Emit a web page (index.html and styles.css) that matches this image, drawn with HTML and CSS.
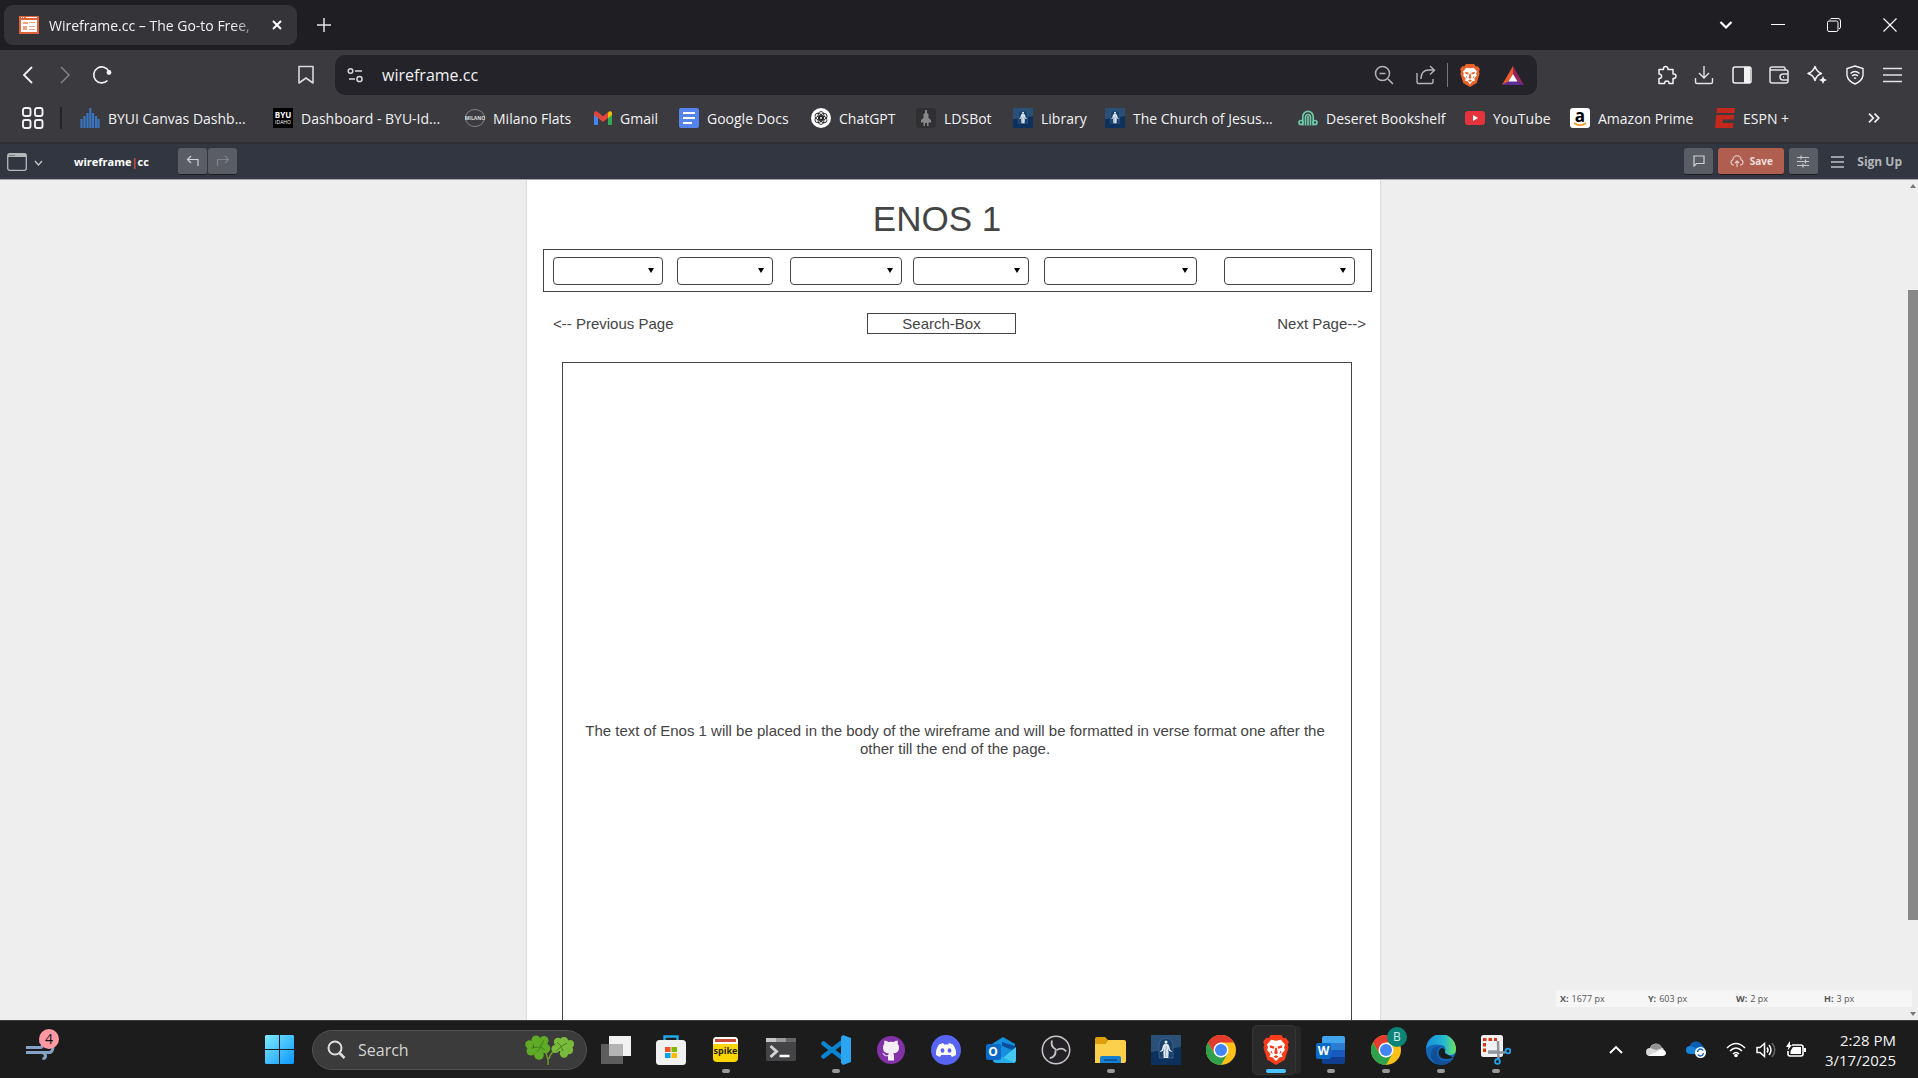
FILE: index.html
```html
<!DOCTYPE html>
<html lang="en">
<head>
<meta charset="utf-8">
<title>Wireframe.cc</title>
<link rel="stylesheet" href="styles.css">
</head>
<body>
<svg class="defs" aria-hidden="true">
  <symbol id="lion" viewBox="0 0 24 28">
    <path d="M7 0h10l2 3 2-.5L24 6l-1 3 .7 3-3.500 11L12 28l-8.200-5L.3 12 1 9 0 6l3-3.500L5 3z" fill="currentColor"/>
    <path d="M7.500 4.500 12 5.300l4.500-.8 4 4.500-1 2.500.8 2.500-3.300 4 1.500 2-3.500 1-3 3.500L9 21l-3.500-1L7 18l-3.300-4 .8-2.500-1-2.500z" fill="#fff"/>
    <path d="m6 9.500 4.500 1.300-.5 2-3.500-1zm12 0-4.500 1.300.5 2 3.500-1zM11.200 12h1.600l.8 5L12 18l-1.600-1zM7.500 14.500l1.500 3-2-1zm9 0-1.500 3 2-1zM9.500 20l2.500-1 2.500 1-2.500 1.800z" fill="currentColor"/>
  </symbol>
  <symbol id="church" viewBox="0 0 30 30">
    <path d="M0 0h30v30H0z" fill="#0b315c"/><path d="M0 0h30v12L0 17z" fill="#2b5078"/>
    <path d="M8 23V10a7 7 0 0 1 14 0v13z" fill="#17406c" stroke="#456a90" stroke-width=".8"/>
    <circle cx="15" cy="7" r="1.500" fill="#e8f0f5"/>
    <path d="m13.500 8.800 3 0 1.500 1.700 1.300 4.500 1.700 1.200-.7.800-2.300-1.200-1-2.300.7 4-.4 5.500h-4.600l-.4-5.500.7-4-1 2.300L9.700 17l-.7-.8 1.700-1.200 1.300-4.500z" fill="#dce7ee"/>
    <path d="m15.500 11-1 6 .3 5" stroke="#7c95ac" stroke-width=".7"/>
  </symbol>
  <symbol id="chrome" viewBox="0 0 30 30">
    <circle cx="15" cy="15" r="15" fill="#fbc116"/>
    <path d="M2 7.500A15 15 0 0 1 28 7.500H15L8.500 18.700z" fill="#e33b2e"/>
    <path d="M2 7.500 8.500 18.700 15 22.500l6.500-3.800L15 30A15 15 0 0 1 2 7.500z" fill="#2da14c"/>
    <circle cx="15" cy="15" r="7.500" fill="#fff"/><circle cx="15" cy="15" r="6" fill="#4285f4"/>
  </symbol>
</svg>

<header class="browser">
  <div class="tabstrip">
    <div class="tab">
      <svg width="20" height="18" viewBox="0 0 20 18"><path d="M0 0h20v18H0z" fill="#e0633a"/><path d="M2 4h16v12H2z" fill="#fff"/><path d="M2 1.500h1m1 0h1m2 0h11" stroke="#fff"/><path d="M4 6h5v2H4zm0 4h4v4H4zm6-4h6v1h-6zm0 4h6v1h-6zm0 3h6v1h-6z" fill="#f0a080"/></svg>
      <span class="tab-title">Wireframe.cc – The Go-to Free,</span>
      <button class="plain tab-close" aria-label="Close tab"><svg width="10" height="10" viewBox="0 0 10 10"><path d="m1 1 8 8m0-8-8 8" stroke="#fff" stroke-width="2"/></svg></button>
    </div>
    <button class="plain new-tab" aria-label="New tab"><svg width="14" height="14" viewBox="0 0 14 14"><path d="M7 0v14M0 7h14" stroke="#e4e4e6" stroke-width="1.500"/></svg></button>
    <div class="window-controls">
      <button class="plain search-tabs" aria-label="Search tabs"><svg width="14" height="10" viewBox="0 0 14 10"><path d="m1.500 2 5.500 5.500L12.500 2" stroke="#fff" stroke-width="2.200"/></svg></button>
      <button class="plain" aria-label="Minimize"><svg width="14" height="14" viewBox="0 0 14 14"><path d="M0 6.500h14" stroke="#fff"/></svg></button>
      <button class="plain" aria-label="Restore"><svg width="14" height="14" viewBox="0 0 14 14"><rect x=".5" y="3" width="10.500" height="10.500" rx="1.500" stroke="#fff"/><path d="M3 1.500Q3.500.5 5 .5h6Q13.500.5 13.500 3v6q0 1.500-1.500 2" stroke="#fff"/></svg></button>
      <button class="plain" aria-label="Close"><svg width="14" height="14" viewBox="0 0 14 14"><path d="m.5.5 13 13m0-13-13 13" stroke="#fff" stroke-width="1.200"/></svg></button>
    </div>
  </div>

  <div class="toolbar">
    <div class="nav">
      <button class="plain" aria-label="Back"><svg width="12" height="18" viewBox="0 0 12 18"><path d="M10 1 2 9l8 8" stroke="#f2f2f3" stroke-width="1.800"/></svg></button>
      <button class="plain" aria-label="Forward"><svg width="12" height="18" viewBox="0 0 12 18"><path d="m2 1 8 8-8 8" stroke="#828287" stroke-width="1.500"/></svg></button>
      <button class="plain" aria-label="Reload"><svg width="20" height="20" viewBox="0 0 20 20"><path d="M15.500 15.500a8 8 0 1 1 1.500-9" stroke="#f2f2f3" stroke-width="1.700"/><circle cx="17" cy="7.500" r="2.400" fill="#f2f2f3"/></svg></button>
      <button class="plain bookmark-btn" aria-label="Bookmark"><svg width="16" height="20" viewBox="0 0 16 20"><path d="M1 1.500h14V18l-7-5-7 5z" stroke="#d9d9dc" stroke-width="1.600" stroke-linejoin="round"/></svg></button>
    </div>
    <div class="omnibox">
      <svg width="17" height="16" viewBox="0 0 17 16"><circle cx="3.500" cy="4" r="2.300" stroke="#d8d8db" stroke-width="1.500"/><path d="M8 4h7M2 12h6" stroke="#d8d8db" stroke-width="1.500"/><circle cx="12.500" cy="12" r="2.600" stroke="#d8d8db" stroke-width="1.500"/></svg>
      <input type="text" value="wireframe.cc" aria-label="Address">
      <div class="omni-actions">
        <button class="plain" aria-label="Zoom out"><svg width="20" height="20" viewBox="0 0 20 20"><circle cx="8.500" cy="8.500" r="7" stroke="#b4b4b8" stroke-width="1.500"/><path d="M5.500 8.500h6m2.500 5.500 5 5" stroke="#b4b4b8" stroke-width="1.500"/></svg></button>
        <button class="plain share" aria-label="Share"><svg width="20" height="20" viewBox="0 0 20 20"><path d="M1 8v9q0 1.500 1.500 1.500h13q1.500 0 1.500-1.500v-3M5 14q0-9 8-9h5M14 1l4.500 4.200L14 9.500" stroke="#b4b4b8" stroke-width="1.400"/></svg></button>
        <button class="plain" aria-label="Shields"><svg class="orange" width="20" height="23"><use href="#lion"/></svg></button>
        <button class="plain" aria-label="Rewards"><svg width="22" height="19" viewBox="0 0 22 19"><path d="M11 0 0 19l7-3.500L11 8z" fill="#f05a2c"/><path d="m11 0 11 19-7-3.500L11 8z" fill="#93245f"/><path d="m0 19 7-4h8l7 4z" fill="#5b2c91"/><path d="m11 8 4.500 7.500h-9z" fill="#fff"/></svg></button>
      </div>
    </div>
    <div class="extensions">
      <button class="plain" aria-label="Extensions"><svg width="20" height="20" viewBox="0 0 20 20"><path d="M2 4.500h4.500c-1-4 5-4 4.500 0H16V9c4-.8 4 5 0 4.500v5h-4c.5-3.500-4.500-3.500-4.500 0H2v-5c3.500.3 3.500-4.500 0-4.500z" stroke="#f2f2f3" stroke-width="1.500" stroke-linejoin="round"/></svg></button>
      <button class="plain" aria-label="Downloads"><svg width="20" height="20" viewBox="0 0 20 20"><path d="M10 1v12m-5-5 5 5 5-5M1.500 13v4q0 1.500 1.500 1.500h14q1.500 0 1.500-1.500v-4" stroke="#e4e4e7" stroke-width="1.400"/></svg></button>
      <button class="plain" aria-label="Sidebar"><svg width="20" height="18" viewBox="0 0 20 18"><rect x="1" y="1" width="18" height="16" rx="2" stroke="#f2f2f3" stroke-width="1.500"/><path d="M12 1h6v16h-6z" fill="#f2f2f3"/></svg></button>
      <button class="plain" aria-label="Wallet"><svg width="20" height="18" viewBox="0 0 20 18"><path d="M16 4V2.500Q16 1 14.500 1H3Q1 1 1 3v12q0 2 2 2h14q2 0 2-2V6q0-2-2-2H3Q1 4 1 3m18 5h-5a3 3 0 0 0 0 6h5M14 11h1" stroke="#e4e4e7" stroke-width="1.500"/></svg></button>
      <button class="plain" aria-label="Assistant"><svg width="20" height="20" viewBox="0 0 20 20"><path d="M8 1.500q1.500 5 6.500 7-5 1.500-6.500 7-1.500-5.500-7-7 5.500-2 7-7z" stroke="#f2f2f3" stroke-width="1.500" stroke-linejoin="round"/><path d="m16 11 1.200 2.800L20 15l-2.800 1.200L16 19l-1.200-2.800L12 15l2.800-1.200z" fill="#f2f2f3"/></svg></button>
      <button class="plain" aria-label="VPN"><svg width="18" height="20" viewBox="0 0 18 20"><path d="m9 1 8 2.500v7Q16 16 9 19 2 16 1 10.500v-7z" stroke="#f2f2f3" stroke-width="1.400"/><path d="M4.500 8.500q4.500-4 9 0M6 11q3-2.500 6 0m-4 2.500q1-.8 2 0" stroke="#f2f2f3" stroke-width="1.500"/></svg></button>
      <button class="plain" aria-label="Menu"><svg width="19" height="16" viewBox="0 0 19 16"><path d="M0 1.500h19M0 8h19M0 14.500h19" stroke="#e4e4e7" stroke-width="1.500"/></svg></button>
    </div>
  </div>

  <nav class="bookmarks" aria-label="Bookmarks">
    <button class="plain apps" aria-label="Bookmark groups"><svg width="22" height="22" viewBox="0 0 22 22" stroke="#f2f2f3" stroke-width="1.900"><rect x="1" y="1" width="7.500" height="8" rx="2"/><rect x="13" y="1" width="7.500" height="8" rx="2"/><rect x="1" y="13" width="7.500" height="8" rx="2"/><rect x="13" y="13" width="7.500" height="8" rx="2"/></svg></button>
    <div class="links">
      <a href="#"><svg width="20" height="20" viewBox="0 0 20 20"><path d="M1.500 20v-9m3 9V8m3 12V5m2.800 15V0m2.700 20V5m3 15V8m2.500 12v-9" stroke="#3974bd" stroke-width="2.200"/></svg>BYUI Canvas Dashb...</a>
      <a href="#"><span class="byu" aria-hidden="true"><b>BYU</b><i>IDAHO</i></span>Dashboard - BYU-Id...</a>
      <a href="#"><span class="milano" aria-hidden="true">MILANO</span>Milano Flats</a>
      <a href="#"><svg width="18" height="14" viewBox="0 0 18 14"><path d="M0 2v11q0 1 1 1h3V5z" fill="#4285f4"/><path d="M18 2v11q0 1-1 1h-3V5z" fill="#34a853"/><path d="M14 1.500Q16-1 18 1.500V4l-4 3z" fill="#fbbc04"/><path d="M0 4V1.500Q2-1 4 1.200l5 4 5-4V7l-5 4-5-4z" fill="#e2453a"/></svg>Gmail</a>
      <a href="#"><svg width="20" height="20" viewBox="0 0 20 20"><rect width="20" height="20" rx="2" fill="#5684ee"/><path d="M4 5h12M4 10h12M4 15h9" stroke="#fff" stroke-width="2.200"/></svg>Google Docs</a>
      <a href="#"><svg width="20" height="20" viewBox="0 0 20 20"><circle cx="10" cy="10" r="10" fill="#fff"/><g stroke="#222" stroke-width=".9"><ellipse cx="10" cy="7.500" rx="3" ry="4"/><ellipse cx="10" cy="7.500" rx="3" ry="4" transform="rotate(60 10 10)"/><ellipse cx="10" cy="7.500" rx="3" ry="4" transform="rotate(120 10 10)"/><ellipse cx="10" cy="7.500" rx="3" ry="4" transform="rotate(180 10 10)"/><ellipse cx="10" cy="7.500" rx="3" ry="4" transform="rotate(240 10 10)"/><ellipse cx="10" cy="7.500" rx="3" ry="4" transform="rotate(300 10 10)"/></g></svg>ChatGPT</a>
      <a href="#"><svg width="20" height="20" viewBox="0 0 20 20"><rect width="20" height="20" rx="4" fill="#302f31"/><path d="M9 2h2v3l1.500 1v4l2.500 2v3l-1.500-1-1 1v3h-1.500v-3h-2v3H7.500v-3l-1-1L5 15v-3l2.500-2V6L9 5z" fill="#88888a"/></svg>LDSBot</a>
      <a href="#"><svg width="20" height="20"><use href="#church"/></svg>Library</a>
      <a href="#"><svg width="20" height="20"><use href="#church"/></svg>The Church of Jesus...</a>
      <a href="#"><svg width="20" height="16" viewBox="0 0 20 16" stroke="#6dc9a6" stroke-width="1.700"><path d="M4.800 15.500V6.500a5.200 5.200 0 0 1 10.400 0v9M7.500 15.500V7a2.500 2.500 0 0 1 5 0v8.500M10 6v9.500"/><circle cx="3" cy="12.500" r="2"/><circle cx="17" cy="12.500" r="2"/></svg>Deseret Bookshelf</a>
      <a href="#"><svg width="20" height="14" viewBox="0 0 20 14"><rect width="20" height="14" rx="3" fill="#e4333c"/><path d="m8 4 5 3-5 3z" fill="#fff"/></svg>YouTube</a>
      <a href="#"><span class="amazon" aria-hidden="true">a<svg width="14" height="5" viewBox="0 0 14 5"><path d="M1 1q6 4.500 12 0" stroke="#f19a20" stroke-width="1.700"/></svg></span>Amazon Prime</a>
      <a href="#"><svg width="20" height="20" viewBox="0 0 20 20"><path d="M2 0h18l-.5 5H1.500zM1.200 7h18l-.5 4.500H8l-.4 3.500h10.800L18 20H0z" fill="#c4281d"/></svg>ESPN +</a>
    </div>
    <button class="plain more" aria-label="More bookmarks"><svg width="12" height="10" viewBox="0 0 12 10"><path d="m1 .7 4.300 4.300L1 9.300M6.500.7 10.800 5 6.500 9.300" stroke="#f2f2f3" stroke-width="1.700"/></svg></button>
  </nav>
</header>

<div class="appbar">
  <button class="plain device" aria-label="Choose page size"><svg width="36" height="18" viewBox="0 0 36 18"><rect x=".7" y=".7" width="18.600" height="16.600" rx="2" stroke="#b5b7bb" stroke-width="1.300"/><path d="M1 1h18v3H1z" fill="#b5b7bb"/><path d="M2.500 2.500h5" stroke="#444" stroke-dasharray="1 1"/><path d="m28 8 3.500 4L35 8" stroke="#c5c7ca" stroke-width="1.300"/></svg></button>
  <a class="logo" href="#">wireframe<span>|</span>cc</a>
  <div class="history">
    <button class="tool" aria-label="Undo"><svg width="14" height="12" viewBox="0 0 14 12"><path d="M5 1 1.500 4.500 5 8M2 4.500h10V11" stroke="#cfd1d4" stroke-width="1.200"/></svg></button>
    <button class="tool" aria-label="Redo"><svg width="14" height="12" viewBox="0 0 14 12"><path d="m9 1 3.500 3.500L9 8m3-3.500H1.500V11" stroke="#808289" stroke-width="1.200"/></svg></button>
  </div>
  <div class="app-actions">
    <button class="tool" aria-label="Comments"><svg width="12" height="12" viewBox="0 0 12 12"><path d="M1 11V1h10v7.500H3.500z" stroke="#d0d2d5" stroke-width="1.200"/></svg></button>
    <button class="tool save"><svg width="14" height="12" viewBox="0 0 14 12"><path d="M4 10H3.500A2.700 2.700 0 0 1 3 4.700a4 4 0 0 1 8 0A2.700 2.700 0 0 1 10.500 10H10M7 12V6M5 8l2-2 2 2" stroke="#e8d5d0" stroke-width="1.100"/></svg>Save</button>
    <button class="tool" aria-label="Settings"><svg width="13" height="13" viewBox="0 0 13 13"><path d="M0 2.500h12M0 6.500h12M0 10.500h12M4 .5v4M8.500 4.500v4M6 8.500v4" stroke="#c5c7ca" stroke-width="1.200"/></svg></button>
    <button class="plain burger" aria-label="Menu"><svg width="13" height="12" viewBox="0 0 13 12"><path d="M0 1h13M0 6h13M0 11h13" stroke="#c0c2c6" stroke-width="1.300"/></svg></button>
    <a class="signup" href="#">Sign Up</a>
  </div>
</div>

<main class="editor">
  <div class="stage">
    <article class="board">
      <h1>ENOS 1</h1>
      <div class="menus">
        <span class="pick p1"><select aria-label="Menu 1"><option></option></select></span>
        <span class="pick p2"><select aria-label="Menu 2"><option></option></select></span>
        <span class="pick p3"><select aria-label="Menu 3"><option></option></select></span>
        <span class="pick p4"><select aria-label="Menu 4"><option></option></select></span>
        <span class="pick p5"><select aria-label="Menu 5"><option></option></select></span>
        <span class="pick p6"><select aria-label="Menu 6"><option></option></select></span>
      </div>
      <div class="pager">
        <a href="#">&lt;-- Previous Page</a>
        <input type="text" value="Search-Box" aria-label="Search">
        <a href="#">Next Page--&gt;</a>
      </div>
      <section class="content"><p>The text of Enos 1 will be placed in the body of the wireframe and will be formatted in verse format one after the other till the end of the page.</p></section>
    </article>
  </div>
  <div class="scrollbar" aria-hidden="true"><i class="up"></i><div class="track"><div class="thumb"></div></div><i class="down"></i></div>
  <dl class="coords">
    <div><dt>X:</dt><dd>1677 px</dd></div>
    <div><dt>Y:</dt><dd>603 px</dd></div>
    <div><dt>W:</dt><dd>2 px</dd></div>
    <div><dt>H:</dt><dd>3 px</dd></div>
  </dl>
</main>

<footer class="taskbar">
  <button class="plain weather" aria-label="Widgets"><svg width="30" height="20" viewBox="0 0 30 20"><path d="M1 7.500h14q2.500 0 2.500-3t-3-2M1 12.500h24q3-1 3-6M1 12.500h16q3.500.5 3.500 3.500t-3 2" stroke="#86a3c6" stroke-width="3"/></svg><span class="badge">4</span></button>
  <button class="plain slot" aria-label="Start"><svg width="29" height="29" viewBox="0 0 29 29"><defs><linearGradient id="win" x2="1" y2="1"><stop stop-color="#7eeaff"/><stop offset="1" stop-color="#0a97ff"/></linearGradient></defs><path d="M1 0h13v14H0V1zm14 0h13l1 1v13H15zM0 15h14v14H1l-1-1zm15 0h14v13l-1 1H15z" fill="url(#win)"/></svg></button>
  <label class="search"><svg width="19" height="19" viewBox="0 0 19 19"><circle cx="8" cy="8" r="6.500" stroke="#dedede" stroke-width="2"/><path d="m12.500 13 5 5" stroke="#dedede" stroke-width="2.500"/></svg><input type="text" placeholder="Search" aria-label="Search">
    <svg width="49" height="30" viewBox="0 0 49 30"><path d="M23 30Q24 20 17 13M24 24q1-7 12-13" stroke="#6e9a25" stroke-width="1.600"/><g fill="#5faa26"><circle cx="11" cy="5" r="4.500"/><circle cx="19" cy="5.500" r="4.500"/><circle cx="4.500" cy="9.500" r="4.200"/><circle cx="6" cy="16" r="4.500"/><circle cx="20.500" cy="13.500" r="4.800"/><circle cx="14" cy="20" r="4.800"/><path d="M9 6h9l-1 12H9z"/></g><g fill="#79ba3c"><circle cx="33" cy="7" r="4.200"/><circle cx="39" cy="6" r="4"/><circle cx="45" cy="9" r="4"/><circle cx="30.500" cy="14" r="4"/><circle cx="39" cy="18.500" r="4.200"/><circle cx="44" cy="15" r="4.200"/><path d="M33 8h9v8h-9z"/></g><path d="m6 13 9-1 4-7m-7 12 4-5 4 3m11 1 6-5 5-3m-4 8-2-5-4-4" stroke="#408619"/></svg></label>
  <div class="pinned">
    <button class="plain slot" aria-label="Task view"><svg width="30" height="28" viewBox="0 0 30 28"><path d="M0 8h22v20H0z" fill="#5d5d5d"/><path d="M8 0h22v20H8z" fill="#f1f1f1"/><path d="M8 8h14v12H8z" fill="#b4b4b4"/></svg></button>
    <button class="plain slot" aria-label="Store"><svg width="30" height="30" viewBox="0 0 30 30"><path d="M8.500 6V1.500h13V6" stroke="#1fa7e8" stroke-width="2.400"/><rect y="5" width="30" height="25" rx="3.500" fill="#f1f1f1"/><path d="M9 12h5.500v5H9z" fill="#f25022"/><path d="M15.500 12H21v5h-5.500z" fill="#7fba00"/><path d="M9 18h5.500v5H9z" fill="#00a4ef"/><path d="M15.500 18H21v5h-5.500z" fill="#ffb900"/></svg></button>
    <button class="plain slot open" aria-label="Spike"><span class="spike"><i></i><b>spike</b></span></button>
    <button class="plain slot" aria-label="Terminal"><svg width="30" height="23" viewBox="0 0 30 23"><rect width="30" height="23" rx="1.500" fill="#444446"/><path d="M0 0h10v4H0z" fill="#c8c8c8"/><path d="M10 0h10v4H10z" fill="#999"/><path d="M20 0h10v4H20z" fill="#666"/><path d="m4.500 8 6 5.500-6 5.500" stroke="#d2d2d2" stroke-width="3"/><path d="M13.500 18h10" stroke="#fff" stroke-width="2.500"/></svg></button>
    <button class="plain slot open" aria-label="Code"><svg width="30" height="30" viewBox="0 0 30 30"><path d="M22 6.500 2.500 21.500M2.500 8.500 22 23.500" stroke="#0b84cf" stroke-width="4.500" stroke-linecap="round"/><path d="m22 0 8 3v24l-8 3-2-2V2z" fill="#2ba4f2"/></svg></button>
    <button class="plain slot" aria-label="GitHub"><svg width="28" height="28" viewBox="0 0 28 28"><circle cx="14" cy="14" r="14" fill="#8331a7"/><path d="M11 24.500v-4.300c-4.500.8-4.500-2.700-6-3.200 2-.5 2.500 2 4 2.300 1 .2 1.500 0 2.200-.3.100-.8.400-1.300.8-1.600-3.500-.4-6-1.800-6-6 0-1.500.5-2.500 1.300-3.400-.3-1.200-.2-2.500.2-3.500 1.500 0 2.800.8 3.800 1.500a11 11 0 0 1 5.400 0c1-.7 2.300-1.500 3.800-1.500.4 1 .5 2.300.2 3.500.8.900 1.300 1.900 1.300 3.400 0 4.200-2.500 5.600-6 6 .6.500 1 1.400 1 2.800v4.300z" fill="#f3edf6"/></svg></button>
    <button class="plain slot" aria-label="Discord"><svg width="30" height="30" viewBox="0 0 30 30"><circle cx="15" cy="15" r="15" fill="#5865f2"/><path d="m12 8 1 1.500h4L18 8l4 1.500q3.500 5 3 10.500l-4 2-1.300-2h-9.400L9 22l-4-2Q4.500 14.500 8 9.500z" fill="#fff"/><ellipse cx="11.500" cy="15.500" rx="1.900" ry="2.200" fill="#5865f2"/><ellipse cx="18.500" cy="15.500" rx="1.900" ry="2.200" fill="#5865f2"/></svg></button>
    <button class="plain slot" aria-label="Outlook"><span class="outlook"><svg width="30" height="26" viewBox="0 0 30 26"><path d="M6 7 17 0l12 7v15H6z" fill="#1490df"/><path d="M16 5 29 9v5l-13-5z" fill="#0a4d9b"/><path d="m11 26 19-16v13q0 3-3 3z" fill="#43c9f4"/><path d="m7 16 22 10H11q-4 0-4-3z" fill="#25aee9"/></svg><b>O</b></span></button>
    <button class="plain slot" aria-label="OBS"><svg width="30" height="30" viewBox="0 0 30 30"><circle cx="15" cy="15" r="13.700" fill="#242226" stroke="#c8c8c8" stroke-width="1.500"/><g stroke="#c8c8c8" stroke-width="1.800"><path d="M15 14.500q-6-3-4-9"/><path d="M15 14.500q-6-3-4-9" transform="rotate(120 15 15)"/><path d="M15 14.500q-6-3-4-9" transform="rotate(240 15 15)"/></g></svg></button>
    <button class="plain slot open" aria-label="Files"><svg width="31" height="26" viewBox="0 0 31 26"><path d="M0 2q0-2 2-2h8l3 3-3 4H0z" fill="#dfa109"/><path d="M0 7h10l3-4h16q2 0 2 2v19q0 2-2 2H0z" fill="#fdd04c"/><path d="M5 26v-5q0-2 2-2h17q2 0 2 2v5z" fill="#1580d1"/><path d="M9 23h13" stroke="#064c88" stroke-width="1.500"/></svg></button>
    <button class="plain slot" aria-label="Gospel Library"><svg width="30" height="30"><use href="#church"/></svg></button>
    <button class="plain slot" aria-label="Chrome"><svg width="30" height="30"><use href="#chrome"/></svg></button>
    <button class="plain slot active" aria-label="Brave"><svg class="red" width="26" height="30"><use href="#lion"/></svg></button>
    <button class="plain slot open" aria-label="Word"><span class="word"><i></i><b>W</b></span></button>
    <button class="plain slot open" aria-label="Chrome profile B"><svg width="30" height="30"><use href="#chrome"/></svg><span class="badge profile">B</span></button>
    <button class="plain slot open" aria-label="Edge"><svg width="30" height="30" viewBox="0 0 30 30"><defs><linearGradient id="edge" x2="1"><stop stop-color="#178fe0"/><stop offset=".6" stop-color="#24b8d0"/><stop offset="1" stop-color="#6ee45a"/></linearGradient></defs><circle cx="15" cy="15" r="15" fill="#1267b9"/><path d="M0 14A15 15 0 0 1 30 14q0 6-6 6-5 0-5-3 2-6-4-7Q4 8 0 14z" fill="url(#edge)"/><path d="M13 15q-2 9 8 9 4 0 6.500-2l2.500-3v11h-5l3-7z" fill="#1c1c1c"/><path d="M11 17q-1 8 8 9 4 0 8-2-5 6-12 6Q3 27 5 17q2-6 10-6-4 2-4 6z" fill="#124f99"/><path d="M15.500 13q3 0 3.500 3-1 2 1 3-7 0-6.500-4z" fill="#1c1c1c"/></svg></button>
    <button class="plain slot open" aria-label="Snipping Tool"><svg width="30" height="30" viewBox="0 0 30 30"><rect width="22" height="22" rx="2.500" fill="#f2f0f2"/><path d="M3.500 17V4.500H16" stroke="#d63a12" stroke-width="3" stroke-dasharray="3.500 2"/><path d="M7 16h10V6" stroke="#9b9da3" stroke-width="1.500"/><path d="m17 6 .5 18M7 17.500h17" stroke="#8d949d" stroke-width="2.500"/><circle cx="27" cy="16" r="2.400" stroke="#22a2ed" stroke-width="1.800"/><circle cx="16.500" cy="26.500" r="2.400" stroke="#22a2ed" stroke-width="1.800"/></svg></button>
  </div>
  <div class="tray">
    <button class="plain wide" aria-label="Hidden icons"><svg width="14" height="9" viewBox="0 0 14 9"><path d="m1 8 6-6 6 6" stroke="#fff" stroke-width="1.900"/></svg></button>
    <button class="plain wide" aria-label="Cloud"><svg width="20" height="14" viewBox="0 0 20 14"><path d="M4 13a4 4 0 0 1 0-8 6 6 0 0 1 11-1 5 5 0 0 1 1 9z" fill="#d9d9d9"/><path d="M4 5q3-6 9-4 3 2 3 4l-6 2z" fill="#929292"/><path d="m2 13 12-6q5-1 6 3 0 3-4 3z" fill="#fff"/></svg></button>
    <button class="plain wide" aria-label="OneDrive"><svg width="20" height="17" viewBox="0 0 20 17"><path d="M4 13a4 4 0 0 1 0-8 6 6 0 0 1 11-1 5 5 0 0 1 1 9z" fill="#1784d9"/><path d="M4 5q3-6 9-4 3 2 3 4l-6 2z" fill="#0c5db0"/><circle cx="14.500" cy="11.500" r="5.500" fill="#fff"/><path d="M11.500 11q.5-3 3-3 1.500 0 2.700 1.500M17.500 12q-.5 3-3 3-1.500 0-2.700-1.500" stroke="#1267b9" stroke-width="1.400"/></svg></button>
    <div class="system">
      <button class="plain" aria-label="Wi-Fi"><svg width="20" height="16" viewBox="0 0 20 16"><path d="M1 6q9-9 18 0M4 9q6-6 12 0M7 12q3-3 6 0" stroke="#fff" stroke-width="1.600"/><circle cx="10" cy="13.500" r="1.800" fill="#fff"/></svg></button>
      <button class="plain" aria-label="Volume"><svg width="20" height="16" viewBox="0 0 20 16"><path d="M1 5.500h3L8.500 1.500v13L4 10.500H1z" stroke="#fff" stroke-width="1.500"/><path d="M11 5.500q2 2.500 0 5M13 3q4 5 0 10" stroke="#fff" stroke-width="1.500"/><path d="M16 1q5.500 7 0 14" stroke="#666" stroke-width="1.500"/></svg></button>
      <button class="plain" aria-label="Battery"><svg width="20" height="17" viewBox="0 0 20 17"><path d="M6 4h9q2 0 2 2v7q0 2-2 2H4q-2 0-2-2v-3" stroke="#fff" stroke-width="1.600"/><path d="M4.500 10 7 6h8v7H4.500zM18 7h2v4h-2zM4 0 0 6h2.500L1.500 9.500 6 4H4z" fill="#fff"/></svg></button>
    </div>
    <time><span>2:28 PM</span><span>3/17/2025</span></time>
  </div>
</footer>
</body>
</html>
```
FILE: styles.css
```css
* { box-sizing: border-box; }

body {
  margin: 0;
  height: 100vh;
  display: flex;
  flex-direction: column;
  overflow: hidden;
  font-family: "Open Sans", "Noto Sans", sans-serif;
  font-size: 14px;
  color: #f2f2f3;
  background: #eee;
}

svg { fill: none; flex: none; display: block; }
.defs { position: absolute; width: 0; height: 0; }
a { color: inherit; text-decoration: none; white-space: nowrap; }
button, input, select { font: inherit; color: inherit; }

.plain {
  display: flex;
  align-items: center;
  justify-content: center;
  padding: 0;
  border: 0;
  background: none;
}

/* Browser chrome */
.browser { background: #3b3a3f; border-bottom: 2px solid #2e2e33; }

.tabstrip {
  display: flex;
  align-items: center;
  height: 50px;
  padding-left: 4px;
  background: #1f1e23;
}
.tab {
  display: flex;
  align-items: center;
  gap: 10px;
  width: 293px;
  height: 40px;
  padding: 0 10px 0 15px;
  border-radius: 9px;
  background: #353439;
}
.tab-title {
  flex: 1;
  white-space: nowrap;
  -webkit-mask-image: linear-gradient(90deg, #000 88%, #0003);
  mask-image: linear-gradient(90deg, #000 88%, #0003);
}
.tab-close { width: 20px; }
.new-tab { width: 54px; height: 40px; }
.window-controls { display: flex; margin-left: auto; }
.window-controls button { width: 56px; height: 48px; }
.window-controls .search-tabs { width: 48px; }

.toolbar { display: flex; align-items: center; height: 50px; }
.nav { display: flex; width: 335px; padding-left: 9px; }
.nav button { width: 37px; height: 40px; }
.nav .bookmark-btn { margin-left: auto; margin-right: 11px; }
.omnibox {
  flex: 1;
  display: flex;
  align-items: center;
  gap: 18px;
  height: 40px;
  padding: 0 3px 0 12px;
  border-radius: 10px;
  background: #242329;
}
.omnibox input {
  flex: 1;
  padding: 0;
  border: 0;
  outline: 0;
  background: none;
  font-size: 16px;
}
.omni-actions { display: flex; }
.omni-actions button { width: 43px; height: 24px; }
.omni-actions .share { border-right: 1px solid #77777c; }
.orange { color: #e9622c; }
.red { color: #fa3c1a; }
.extensions {
  display: grid;
  grid-template-columns: repeat(7, 1fr);
  width: 381px;
  padding: 0 7px 0 111px;
}

.bookmarks { display: flex; align-items: center; height: 42px; padding-bottom: 6px; }
.apps { width: 62px; height: 22px; padding-left: 5px; border-right: 2px solid #242329; }
.links {
  flex: 1;
  display: grid;
  grid-template-columns: 193px 192px 129px 85px 132px 105px 97px 92px 193px 167px 105px 145px 1fr;
  padding-left: 18px;
}
.links a { display: flex; align-items: center; gap: 8px; }
.more { width: 88px; height: 20px; }
.byu {
  display: grid;
  place-content: center;
  width: 20px;
  height: 20px;
  background: #000;
  color: #fff;
  font-size: 8px;
  line-height: 8px;
  text-align: center;
}
.byu i { font-size: 5px; font-style: normal; line-height: 6px; }
.milano {
  display: grid;
  place-content: center;
  width: 20px;
  height: 18px;
  border: 1px solid #858589;
  border-radius: 50%;
  color: #ddd;
  font-size: 5px;
  font-weight: 700;
}
.amazon {
  display: grid;
  justify-items: center;
  align-content: center;
  width: 20px;
  height: 20px;
  border-radius: 3px;
  background: #fff;
  color: #000;
  font-size: 17px;
  font-weight: 700;
  line-height: 13px;
}

/* Editor bar */
.appbar {
  display: flex;
  align-items: center;
  height: 36px;
  padding: 0 16px 0 7px;
  border-bottom: 1px solid #a5a6a8;
  background: #323640;
  font-size: 12px;
  font-weight: 700;
}
.logo { width: 104px; margin-left: 31px; color: #fff; font-size: 11px; }
.logo span { color: #e0573f; }
.history { display: flex; gap: 1px; }
.tool {
  display: flex;
  align-items: center;
  justify-content: center;
  gap: 6px;
  width: 29px;
  height: 27px;
  padding: 0;
  border: 0;
  border-bottom: 1px solid #1c1d21;
  border-radius: 3px;
  background: #5a5d66;
}
.app-actions { display: flex; align-items: center; gap: 5px; margin-left: auto; }
.save { width: 66px; background: #b05e50; font-size: 10px; color: #f0dfdb; }
.burger { width: 29px; }
.signup { color: #b4b6ba; }

/* Drawing area */
.editor { position: relative; flex: 1; min-height: 0; display: flex; background: #eee; }
.stage {
  flex: 1;
  overflow: hidden;
  font-family: "Liberation Sans", Arial, sans-serif;
  font-size: 15px;
  line-height: 18px;
  color: #444;
}
.board {
  max-width: 853px;
  margin: 0 auto;
  padding: 18px 8px 40px 16px;
  background: #fff;
  box-shadow: 0 0 2px #bbb;
}
h1 {
  margin: 0 41px 10px 0;
  text-align: center;
  font-size: 35px;
  font-weight: 400;
  line-height: 41px;
}
.menus {
  display: grid;
  grid-template-columns: 110fr 14fr 96fr 17fr 112fr 11fr 116fr 15fr 153fr 27fr 131fr;
  height: 43px;
  padding: 7px 16px 7px 9px;
  border: 1px solid #444;
}
.pick { position: relative; height: 28px; }
.p2 { grid-column: 3; }
.p3 { grid-column: 5; }
.p4 { grid-column: 7; }
.p5 { grid-column: 9; }
.p6 { grid-column: 11; }
.pick select {
  appearance: none;
  width: 100%;
  height: 28px;
  border: 1px solid #444;
  border-radius: 4px;
  background: #fff;
}
.pick::after {
  content: "";
  position: absolute;
  right: 9px;
  top: 11px;
  border: 3px solid transparent;
  border-top: 5px solid #000;
  border-bottom: 0;
  pointer-events: none;
}
.pager {
  display: grid;
  grid-template-columns: 314fr 149px 350fr;
  align-items: center;
  margin: 21px 6px 28px 10px;
}
.pager input {
  width: 100%;
  height: 21px;
  padding: 0;
  border: 1px solid #444;
  text-align: center;
}
.pager a:last-child { text-align: right; }
.content {
  display: flex;
  align-items: center;
  justify-content: center;
  min-height: 756px;
  margin: 0 20px 0 19px;
  padding: 0 24px 0 20px;
  border: 1px solid #444;
  text-align: center;
}
.content p { margin: 0; }

.coords {
  position: absolute;
  right: 6px;
  bottom: 13px;
  display: grid;
  grid-template-columns: repeat(4, 88px);
  margin: 0;
  padding-left: 4px;
  background: #f6f6f6;
  font-size: 9px;
  line-height: 17px;
  color: #555;
}
.coords div { display: flex; gap: 3px; }
.coords dt { font-weight: 700; }
.coords dd { margin: 0; }

.scrollbar {
  display: flex;
  flex-direction: column;
  align-items: center;
  width: 11px;
  padding: 4px 0;
}
.scrollbar i { border: 3px solid transparent; }
.scrollbar .up { border-top: 0; border-bottom: 4px solid #777; }
.scrollbar .down { border-bottom: 0; border-top: 4px solid #777; }
.track { flex: 1; width: 100%; padding: 0 0 92px 1px; display: flex; flex-direction: column; justify-content: flex-end; }
.thumb { flex: 0 0 86%; background: #888; }

/* Taskbar */
.taskbar {
  display: flex;
  align-items: center;
  height: 58px;
  border-top: 1px solid #3c3e3e;
  background: #1c1c1c;
}
.weather { position: relative; width: 80px; height: 58px; margin-right: 172px; }
.badge {
  position: absolute;
  left: 39px;
  top: 8px;
  width: 20px;
  height: 20px;
  border-radius: 50%;
  background: #fe99a4;
  color: #111;
  line-height: 20px;
  text-align: center;
}
.slot { position: relative; width: 55px; height: 50px; }
.profile { left: 29px; top: 2px; background: #0b8577; color: #d5ece8; font-size: 12px; }
.search {
  display: flex;
  align-items: center;
  gap: 12px;
  width: 275px;
  height: 40px;
  margin: 0 1px 0 5px;
  padding: 0 12px 0 14px;
  border: 1px solid #505050;
  border-radius: 20px;
  background: #3b3b3b;
}
.search input {
  flex: 1;
  min-width: 0;
  padding: 0;
  border: 0;
  background: none;
  font-size: 16px;
}
.search input::placeholder { color: #d3d3d3; opacity: 1; }
.pinned { display: flex; }
.open::after, .active::after {
  content: "";
  position: absolute;
  bottom: 2px;
  width: 8px;
  height: 4px;
  border-radius: 2px;
  background: #999;
}
.active::after { width: 20px; background: #4cc2ff; }
.active::before {
  content: "";
  position: absolute;
  inset: 0 7px 0 4px;
  border: 1px solid #353535;
  border-radius: 5px;
  background: #2a2a2a;
  box-shadow: 6px 0 0 -1px #282828;
}
.active svg { position: relative; }
.spike {
  display: block;
  width: 25px;
  height: 25px;
  overflow: hidden;
  border-radius: 4px;
  background: #fbd404;
  color: #222;
  font-size: 9px;
  line-height: 14px;
}
.spike i { display: block; height: 7px; border: 2px solid #fff; background: #cb4935; }
.outlook, .word { position: relative; display: block; }
.outlook b, .word b {
  position: absolute;
  left: 0;
  top: 7px;
  width: 15px;
  height: 16px;
  border-radius: 2px;
  background: #0b69c7;
  color: #fff;
  font-size: 12px;
  line-height: 16px;
}
.word i {
  display: block;
  width: 23px;
  height: 28px;
  margin-left: 6px;
  border-radius: 2px;
  background: linear-gradient(#41a5ee 25%, #2b7cd3 25% 50%, #185abd 50% 75%, #103f91 75%);
}
.tray { display: flex; align-items: center; margin-left: auto; padding-right: 22px; }
.tray button { width: 30px; height: 40px; }
.tray .wide { width: 40px; }
.system { display: flex; margin-left: 5px; }
time { display: grid; min-width: 85px; font-size: 15px; line-height: 20px; text-align: right; }
```
